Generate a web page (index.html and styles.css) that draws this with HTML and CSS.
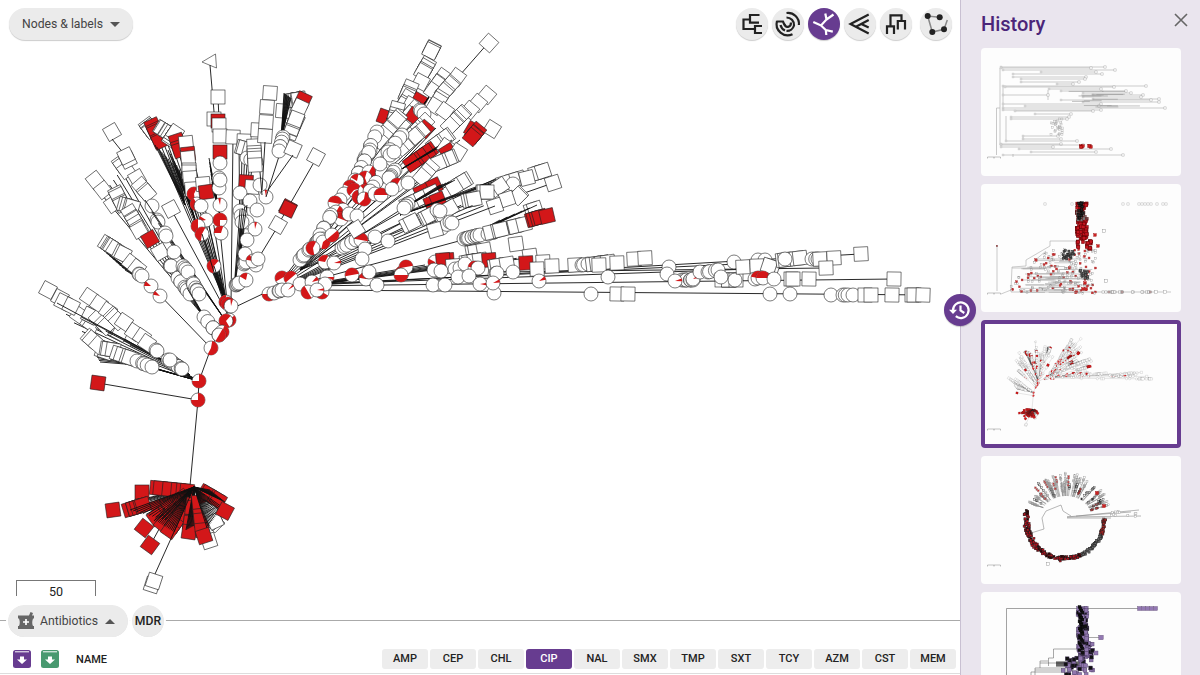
FILE: index.html
```html
<!DOCTYPE html>
<html lang="en">
<head>
	<meta charset="utf-8">
	<title>Tree viewer</title>
	<link rel="stylesheet" href="styles.css">
</head>
<body>
	<div class="app">
		<div class="main">
			<div class="tree">
				<svg id="tree" width="960" height="596" viewBox="0 0 960 596"></svg>
				<button class="pill labels">Nodes &amp; labels <i class="caret down"></i></button>
				<div class="tools">
					<button class="round"><svg viewBox="0 0 32 32"><path d="M14 11.5H7.5V21H19M23.5 7H14v7.7h9M26 18h-7v7h7"/></svg></button>
					<button class="round"><svg viewBox="0 0 32 32"><path d="M14.5 5A11 11 0 0 1 26.9 17M4.5 13.500H11L12.500 17M5 13A11.2 11.2 0 0 0 20.5 26.2M8.5 17A8 8 0 0 0 13 22.500M14.5 9.5A7.500 7.500 0 0 1 22 17.500A7.3 7.3 0 0 1 14.500 22.8M12.5 16C13.500 20.500 19 19.500 19 14.5"/></svg></button>
					<button class="round active"><svg viewBox="0 0 32 32"><path d="M5.3 14L13 17.5 18.5 11.5 17.3 5.5M18.5 11.5L25.5 6.5M13 17.5L17.8 22 24.8 23.6M17.8 22L18.3 27"/></svg></button>
					<button class="round"><svg viewBox="0 0 32 32"><path d="M24.7 6.5L6.5 16 24.7 25.5M24.7 12L12 18.8M17.8 16.3L24.7 19.5"/></svg></button>
					<button class="round"><svg viewBox="0 0 32 32"><path d="M10.5 18V7.3H21.5V13M7 26V18.3H14V26M17.8 21.5V13H25V21.5"/></svg></button>
					<button class="round last"><svg viewBox="0 0 32 32"><path class="gray" d="M19.7 9.3L7.7 8 12.3 24 24 21.3 27.3 12"/><g class="dots"><circle cx="7.7" cy="8" r="3"/><circle cx="19.7" cy="9.3" r="3"/><circle cx="12.3" cy="24" r="3"/><circle cx="24" cy="21.3" r="3"/></g></svg></button>
				</div>
				<div class="scale">50</div>
			</div>
			<div class="bar">
				<button class="pill">
					<svg class="mortar" width="16" height="18" viewBox="0 0 16 18"><path d="M0 3.5H11L12.5 0 15 1 14 3.5H16V6.5H15Q13.5 11 15 14H16V17H0V14H1Q2.500 11 1 6.500H0Z"/><path class="plus" d="M8 7v6M5 10h6"/></svg>
					Antibiotics <i class="caret up"></i>
				</button>
				<button class="round mdr">MDR</button>
			</div>
			<div class="head">
				<svg class="dl" width="18" height="18" viewBox="0 0 18 18"><rect width="18" height="18" rx="2.500"/><path d="M2 1.800H16"/><path class="arrow" d="M7 6.500h4v3h3L9 14 4 9.500h3z"/></svg>
				<svg class="dl green" width="18" height="18" viewBox="0 0 18 18"><rect width="18" height="18" rx="2.500"/><path d="M2 1.800H16"/><path class="arrow" d="M7 6.500h4v3h3L9 14 4 9.500h3z"/></svg>
				<span class="name">NAME</span>
				<div class="cols">
					<span>AMP</span><span>CEP</span><span>CHL</span><span class="current">CIP</span><span>NAL</span><span>SMX</span><span>TMP</span><span>SXT</span><span>TCY</span><span>AZM</span><span>CST</span><span>MEM</span>
				</div>
			</div>
		</div>
		<div class="history">
			<button class="round toggle"><svg viewBox="0 0 32 32"><path d="M9 16.500A7.800 7.800 0 1 1 11.800 22.200M16.500 11.500V16.500L20.300 19"/><path class="tip" d="M5 15.800H13L9 20z"/></svg></button>
			<div class="title">
				<h2>History</h2>
				<svg width="14" height="14" viewBox="0 0 14 14"><path d="M1 1L13 13M13 1L1 13"/></svg>
			</div>
			<div class="list">
				<div class="thumb"><svg id="t1" viewBox="0 0 200 128"></svg></div>
				<div class="thumb"><svg id="t2" viewBox="0 0 200 128"></svg></div>
				<div class="thumb current"><svg id="t3" viewBox="0 0 200 128"></svg></div>
				<div class="thumb"><svg id="t4" viewBox="0 0 200 128"></svg></div>
				<div class="thumb cut"><svg id="t5" viewBox="0 0 200 83"></svg></div>
			</div>
		</div>
	</div>
	<script src="tree.js"></script>
</body>
</html>
```

FILE: styles.css
```css
* {padding: 0; margin: 0; box-sizing: border-box;}
body {
	font-family: Roboto, "Liberation Sans", sans-serif;
	color: #222;
	background: #fff;
	overflow: hidden;
}
button {
	border: 0;
	font-family: inherit;
	cursor: pointer;
}
.app {
	display: flex;
	height: 675px;
}
.main {
	width: 960px;
	display: flex;
	flex-direction: column;
}
.tree {
	position: relative;
	height: 605px;
}
.tree svg {
	display: block;
}
#tree, #t3 {
	stroke: #222;
	stroke-width: .6;
	fill: #fff;
}
#tree .l {
	stroke: #111;
	stroke-width: .9;
}
#t3 {
	stroke-width: 1.1;
}
.red {
	fill: #d31719;
}
.pill {
	display: flex;
	align-items: center;
	height: 32px;
	padding: 0 13px;
	border-radius: 16px;
	background: #ebebeb;
	box-shadow: 0 1px 1px rgba(0,0,0,.2);
	font-size: 12.2px;
	color: #444;
}
.labels {
	position: absolute;
	left: 9px;
	top: 8px;
}
.caret {
	margin-left: 7px;
	border: 5px solid transparent;
}
.down {
	border-top-color: #555;
	border-bottom: 0;
}
.up {
	border-bottom-color: #555;
	border-top: 0;
}
.tools {
	position: absolute;
	right: 8px;
	top: 8px;
	display: flex;
	gap: 4px;
}
.round {
	width: 32px;
	height: 32px;
	border-radius: 50%;
	background: #ebebeb;
	box-shadow: 0 1px 1px rgba(0,0,0,.2);
}
.round svg {
	display: block;
	fill: none;
	stroke: #222;
	stroke-width: 2.2;
}
.round .gray {
	stroke: #888;
	stroke-width: 1.5;
}
.round .dots {
	fill: #222;
	stroke: none;
}
.active, .toggle {
	background: #673c90;
}
.active svg, .toggle svg {
	stroke: #fff;
}
.last {
	margin-left: 4px;
}
.scale {
	position: absolute;
	left: 16px;
	top: 580px;
	width: 80px;
	height: 16px;
	border: 1.5px solid #777;
	border-bottom: 0;
	font-size: 12.5px;
	line-height: 21px;
	text-align: center;
}
.bar {
	display: flex;
	gap: 4px;
	height: 38px;
	padding-left: 8px;
	background: linear-gradient(#aaa, #aaa) 0 15px / 100% 1px no-repeat;
}
.bar .pill {
	padding: 0 13px 0 10px;
	outline: 2px solid #fff;
}
.mortar {
	margin-right: 6px;
	fill: #666;
}
.plus {
	stroke: #fff;
	stroke-width: 1.7;
}
.mdr {
	font-size: 12.2px;
	font-weight: 500;
	white-space: nowrap;
	display: flex;
	align-items: center;
	justify-content: center;
	color: #222;
	outline: 2px solid #fff;
}
.head {
	display: flex;
	align-items: center;
	height: 31px;
	padding: 2px 4px 0 13px;
	border-bottom: 1px solid #ddd;
	font-size: 11px;
	font-weight: 500;
}
.dl {
	margin-right: 10px;
	fill: #673c90;
	stroke: none;
}
.dl path {
	stroke: #fff;
	stroke-width: 1;
}
.dl .arrow {
	fill: #fff;
	stroke: none;
}
.green {
	fill: #48996f;
}
.name {
	margin-left: 7px;
}
.cols {
	display: flex;
	gap: 2px;
	margin-left: auto;
}
.cols span {
	width: 46px;
	height: 20px;
	border-radius: 3px;
	background: #ededed;
	line-height: 20px;
	text-align: center;
}
.cols .current {
	background: #673c90;
	color: #fff;
}
.history {
	position: relative;
	width: 240px;
	padding-left: 20px;
	border-left: 1px solid #c9c0d2;
	background: #eae5ee;
}
.toggle {
	position: absolute;
	left: -17px;
	top: 294px;
}
.toggle .tip {
	fill: #fff;
	stroke: none;
}
.title {
	display: flex;
	justify-content: space-between;
	height: 48px;
	padding: 12px 12px 0 0;
}
.title h2 {
	font-size: 20px;
	font-weight: 500;
	line-height: 24px;
	color: #4b2579;
}
.title svg {
	margin-top: 1px;
	stroke: #666;
	stroke-width: 1.6;
}
.list {
	display: flex;
	flex-direction: column;
	gap: 8px;
}
.thumb {
	width: 200px;
	height: 128px;
	border-radius: 4px;
	background: #fdfdfd;
	overflow: hidden;
}
.thumb svg {
	display: block;
	width: 100%;
	height: 100%;
}
.thumb.current {
	box-shadow: inset 0 0 0 4px #673c90;
}
.thumb.cut {
	height: 83px;
	border-radius: 4px 4px 0 0;
}
```

FILE: tree.js
```javascript
/*
 * l x1 y1 x2 y2        branch
 * f x y x1 y1 x2 y2 n  fan of branches from x,y
 * s / r x y a          leaf, white or red, rotated by a
 * t x y                collapsed leaf
 * c x y [part start]   inner node with a red slice
 * S / R n x1 y1 x2 y2  row of leaves
 * C n x1 y1 x2 y2      row of inner nodes
 */
var data = `
l 190 486 198 400
l 198 400 98 383
l 198 400 199 381
l 199 381 211 348
l 211 348 229 310
l 229 310 275 288
r 98 383 8
f 199 381 50 297 90 340 6
f 199 381 95 352 120 358 6
f 190 375 112 318 125 325 7
f 150 366 95 354 100 362 6
S 2 103 351 106 352
S 3 79 315 92 324
S 4 105 325 120 333
s 48 290 28
s 60 298 28
S 5 63 302 107 324
S 3 98 318 106 326
f 178 368 57 303 130 345 4
s 89 297 34
s 99 304 34
s 108 311 34
S 3 113 316 118 321
s 124 322 34
s 134 332 34
s 142 337 34
s 147 343 34
S 3 90 338 98 345
S 3 107 349 113 350
S 4 118 354 130 358
C 5 137 361 152 367
C 2 156 350 157 351
C 10 168 360 182 369
c 170 360
l 211 348 151 286
f 151 286 103 250 125 270 8
S 5 107 244 115 249
S 2 121 253 123 254
s 131 263 38
s 137 268 38
C 3 139 274 142 276
c 151 286 .12 180
c 160 296 .1 190
f 205 318 102 195 121 170 6
s 95 180 52
s 103 190 52
s 113 204 55
S 4 117 194 122 204
S 4 125 205 132 207
S 5 130 213 139 228
s 112 132 60
l 112 139 124 154
S 3 121 163 126 170
s 128 160 64
s 126 156 64
s 137 178 60
S 3 141 186 147 193
c 152 206
C 2 157 220 158 222
f 225 320 145 200 165 235 4
l 171 209 228 315
s 171 209 62
s 139 230 60
r 150 239 60
s 160 252 60
c 165 233
c 166 236
C 3 170 266 171 266
c 174 252
C 7 178 278 190 294
C 4 183 266 188 272
C 6 193 283 199 294
l 187 288 204 317
C 5 204 317 219 335
f 228 308 150 128 195 165 9
S 5 148 126 151 130
R 5 153 126 160 141
f 185 205 155 145 179 170 12
S 5 162 129 170 134
S 5 171 139 175 133
R 3 177 141 180 150
f 195 220 168 150 185 180 9
s 186 143 84
r 188 154 84
s 188 158 84
S 2 189 170 189 172
s 190 178 86
s 192 189 86
c 194 194 .6 80
c 197 204 .5 60
f 228 312 195 210 220 230 5
s 203 184 85
r 206 192 82
c 201 206
t 210 61
l 210 65 216 135
l 218 97 219 120
s 218 97 0
s 214 119 0
r 218 121 0
s 219 125 0
s 220 136 0
f 220 215 209 158 213 190 9
r 220 152 0
c 220 163
c 219 178
c 219 188
c 220 180
c 220 205 .06 255
c 220 220 .75 90
c 221 233 .3 180
c 206 220 .12 170
c 198 226 .5 90
c 202 234 .55 100
c 214 266 .6 95
l 214 266 228 310
l 202 234 226 310
l 233 137 231 305
s 233 137 2
s 244 141 2
f 240 260 239 140 255 145 6
s 258 130 3
S 3 243 148 250 150
C 3 247 158 256 162
S 5 254 146 255 165
r 246 182 4
s 252 187 4
c 240 193
c 260 185
c 266 197 .05 260
l 262 195 260 172
l 266 197 281 150
c 250 201
c 257 210
c 240 211
c 241 216
c 247 222
c 242 222
c 255 229 .06 265
f 234 290 240 210 247 205 4
s 270 93 4
s 267 107 4
s 266 122 4
s 265 136 4
l 265 142 262 190
s 283 111 5
S 5 293 100 299 99
r 303 100 25
f 281 140 284 93 291 98 12
s 300 107 25
s 296 121 25
S 5 291 132 296 119
C 6 283 137 279 151
s 293 149 24
l 293 155 268 190
s 316 157 28
l 313 164 278 225
r 288 208 28
r 288 209 25
s 278 225 30
l 275 231 258 259
C 3 244 264 246 262
c 247 240
c 245 254
c 256 265
c 253 261 .15 190
c 258 259
C 5 236 285 239 283
c 246 280 .2 210
c 226 302 .5 90
c 229 320 .5 320
c 226 321 .7 60
c 222 332 .6 290
c 219 335 .5 300
c 228 304 .5 130
c 231 306 .06 265
c 211 348 .55 280
c 199 381 .75 270
c 198 400 .75 270
f 300 270 400 110 460 140 6
f 300 270 430 175 530 180 4
f 275 290 410 110 445 200 7
f 315 245 394 110 425 73 9
l 489 42 460 75
s 489 43 42
S 3 432 49 431 51
S 4 427 65 423 72
s 421 82 28
S 3 410 88 407 95
S 4 408 98 399 113
r 419 101 30
r 385 117 20
s 411 105 30
S 5 397 109 392 127
f 420 110 443 76 446 72 4
S 4 443 77 433 91
s 457 77 36
S 4 451 84 444 92
S 3 440 98 435 106
s 445 111 36
s 487 95 40
s 478 103 40
s 470 110 40
S 6 462 114 450 126
r 473 130 30
s 492 129 32
R 4 477 131 472 137
S 5 415 109 401 125
r 414 116 35
C 3 420 110 424 114
S 6 398 118 379 140
C 6 377 132 364 160
S 5 425 122 410 137
r 425 129 40
S 8 421 131 390 158
C 5 402 135 388 152
S 4 446 137 435 145
R 6 429 151 412 163
f 400 170 440 145 452 140 5
s 446 147 35
r 448 152 58
s 458 152 32
S 4 450 158 438 163
C 8 370 150 355 180
c 369 172 .5 300
c 365 178 .6 70
c 390 155
c 394 152
C 4 384 170 373 187
c 380 164
C 4 395 170 390 177
c 389 178
S 4 430 168 422 177
r 434 186 -25
r 422 192 -25
S 3 464 181 454 187
S 5 408 204 432 193
f 400 210 440 185 455 180 6
r 432 203 -22
r 438 200 -22
f 400 215 500 178 540 168 4
S 5 540 172 504 183
s 543 171 -18
l 553 183 510 198
s 553 183 -18
s 527 178 -14
c 513 184
S 2 497 188 500 186
S 3 483 192 487 192
S 3 469 200 474 199
S 2 519 195 518 196
s 507 199 -18
s 495 206 -18
c 357 181 .2 210
c 350 187 .5 200
c 344 194
c 340 200 .5 30
c 354 190 .6 130
c 359 197 .6 80
c 365 191 .3 230
c 370 191
c 364 199 .6 280
c 375 194
c 381 195 .5 180
c 397 185 .5 120
c 392 189
c 408 183
c 335 203 .5 190
c 343 210
c 336 212 .3 300
c 341 219 .5 200
c 349 214
c 357 216
C 5 331 215 320 235
c 323 239 .5 330
C 5 316 243 320 239
c 323 242 .4 320
c 332 235 .5 320
c 300 260
C 4 303 256 310 249
c 313 248 .6 80
f 270 292 450 205 495 206 5
C 4 408 204 404 208
S 2 408 224 412 222
S 3 426 217 430 215
S 4 440 214 450 208
C 2 437 210 440 211
C 3 442 228 450 222
s 435 230 -16
c 452 223
C 6 342 248 356 240
c 361 240 .5 190
c 375 237
c 388 241
c 365 249
c 362 259
s 356 229 -32
l 270 292 470 238
S 2 532 210 535 209
f 470 236 500 220 537 205 6
C 10 464 239 480 235
C 3 488 234 494 232
S 6 491 232 524 224
R 4 533 219 540 217
r 547 216 -13
f 275 290 425 265 535 257 7
l 290 285 780 262
l 290 285 780 268
l 300 286 894 279
l 300 286 860 254
l 500 272 825 268
l 317 290 930 295
s 516 244 -8
s 530 256 -8
s 543 262 -3
c 435 262 .3 100
S 3 473 252 484 250
r 447 260 -4
r 443 260 -4
s 453 266 -4
c 434 270
c 441 271
c 455 269
c 460 268
S 5 467 262 480 260
c 465 264
c 475 268 .4 190
r 489 260 -4
c 478 268
S 3 495 266 507 264
r 526 263 -3
C 3 495 274 497 273
s 537 269 -2
s 552 266 -2
c 513 272
s 575 265 -3
C 3 582 265 588 264
S 5 593 264 608 262
s 599 265 -2
s 617 263 -2
s 634 259 -3
s 645 258 -3
c 458 277
c 469 276
c 433 285
c 445 285
c 480 284 .06 350
c 494 293
c 493 283 .07 330
c 539 281 .08 320
c 608 277
s 617 294 1
s 628 294 1
c 591 294
c 669 267
c 667 274
C 7 682 280 693 280
c 675 281 .06 340
c 693 279 .08 320
c 700 272
C 4 708 272 718 270
c 734 262
c 758 260
c 765 260
S 4 722 280 736 280
c 721 277
c 735 280
s 743 267 -3
s 757 266 -2
S 2 772 267 769 266
c 755 279
c 758 278 .5 190
c 763 278 .5 180
S 4 783 260 800 258
c 785 259
C 3 812 259 818 259
s 820 259 -3
s 834 258 -3
s 826 268 -2
s 861 254 -3
c 774 279
S 2 791 279 793 279
s 809 279 1
s 894 279 1
c 770 294
c 790 294
c 831 295
C 3 843 295 848 295
c 853 295
S 2 865 295 871 295
s 892 295 1
S 2 912 295 914 295
s 923 295 2
c 282 278 .5 150
c 291 278 .5 140
c 300 284
c 269 294 .5 0
c 274 293
C 3 279 291 282 290
c 288 290 .05 310
c 312 282 .1 310
c 308 292 .5 60
c 322 292 .5 30
c 327 277 .08 0
c 325 284
c 317 290 .06 345
c 325 262 .3 190
c 334 263 .06 340
c 352 275 .5 170
c 366 279 .45 190
c 369 272
c 377 285
c 402 273 .6 60
c 406 267 .5 170
c 401 275 .5 0
S 2 215 523 213 521
f 194 487 130 502 165 500 8
r 142 492 0
R 7 157 488 187 491
r 113 510 -8
R 6 130 509 143 505
R 3 158 507 172 503
R 5 182 498 156 517
r 144 528 38
l 165 508 154 521
l 175 500 152 542
r 150 545 36
R 6 177 507 163 524
R 6 184 510 170 530
f 194 487 155 520 174 532 14
R 5 193 505 189 532
f 194 487 186 530 197 524 12
R 4 199 502 202 530
s 209 541 -18
r 204 536 -18
S 4 209 508 215 521
R 4 206 493 218 500
f 194 487 207 528 222 507 16
f 194 487 210 490 225 502 12
r 225 511 28
f 194 487 130 510 165 520 12
l 192 492 155 574
s 152 585 18
s 154 581 18
`;

function $(id) { return document.getElementById(id);}

function line(x1,y1,x2,y2){
	return '<path class="l" d="M' + x1 + ' ' + y1 + 'L' + x2 + ' ' + y2 + '"/>';
}
function leaf(x,y,a,red){
	return '<rect ' + (red ? 'class="red" ' : '') + 'x="-7" y="-7" width="14" height="14" transform="translate(' + x + ' ' + y + ') rotate(' + a + ')"/>';
}
function node(x,y,part,start){
	var html = '<circle cx="' + x + '" cy="' + y + '" r="7"/>';
	if (part) {
		var a = start * Math.PI / 180;
		var b = a + part * Math.PI * 2;
		html += '<path class="red" stroke="none" d="M' + x + ' ' + y +
			'L' + (x + 7 * Math.cos(a)) + ' ' + (y + 7 * Math.sin(a)) +
			'A7 7 0 ' + (part > .5 ? 1 : 0) + ' 1 ' + (x + 7 * Math.cos(b)) + ' ' + (y + 7 * Math.sin(b)) + 'Z"/>';
	}
	return html;
}

function draw(text){
	var html = "";
	var rows = text.trim().split("\n");
	for (var i = 0; i < rows.length; i++) {
		var v = rows[i].split(" ");
		var k = v.shift();
		v = v.map(Number);
		if (k == "l") html += line(v[0],v[1],v[2],v[3]);
		if (k == "s" || k == "r") html += leaf(v[0],v[1],v[2],k == "r");
		if (k == "t") html += '<path transform="translate(' + v[0] + ' ' + v[1] + ')" d="M-8 1L5.500 -7 6.500 7Z"/>';
		if (k == "c") html += node(v[0],v[1],v[2],v[3]);
		if (k == "f") {
			for (var j = 0; j < v[6]; j++) {
				var t = j / (v[6] - 1);
				html += line(v[0],v[1],v[2] + (v[4] - v[2]) * t,v[3] + (v[5] - v[3]) * t);
			}
		}
		if (k == "S" || k == "R" || k == "C") {
			//leaves follow the direction of their row
			var angle = Math.atan2(v[4] - v[2],v[3] - v[1]) * 180 / Math.PI;
			for (var j = 0; j < v[0]; j++) {
				var t = j / (v[0] - 1);
				if (j > 0 && j < v[0] - 1) t += Math.sin(j * 2.4 + i) * .6 / (v[0] - 1); //uneven steps
				var x = v[1] + (v[3] - v[1]) * t;
				var y = v[2] + (v[4] - v[2]) * t;
				html += k == "C" ? node(x,y) : leaf(x,y,angle,k == "R");
			}
		}
	}
	return html;
}

//small repeatable random
var seed = 7;
function rnd(a,b){
	seed = (seed * 16807) % 2147483647;
	return a + (b - a) * seed / 2147483647;
}
function box(x,y,s,fill,stroke){
	return '<rect x="' + (x - s / 2) + '" y="' + (y - s / 2) + '" width="' + s + '" height="' + s + '" fill="' + fill + '" stroke="' + stroke + '" stroke-width=".4"/>';
}
function path(d,color,w){
	return '<path fill="none" stroke="' + color + '" stroke-width="' + w + '" d="' + d + '"/>';
}
var bar = path("M6.500 110.500V109H19.500V110.500M12 109.800H14","#888",.5);

var tree = draw(data);
$("tree").innerHTML = tree;
$("t3").innerHTML = '<g transform="translate(20 12) scale(.163 .159)" stroke-opacity=".6">' + tree + '</g>' + bar;

//first: rectangular tree
var rows1 = [[19,20,124],[20,20,110],[22,22,134],[24,60,115],[26,32,121],[29,32,105],[31,40,104],[34,40,98],[36,76,92],[38,22,165],[39,24,133],[41,68,120],[43,80,145],[45,102,150],[47,22,67],[47,112,162],[49,102,160],[51,112,178],[52,80,170],[54,102,178],[56,22,120],[58,44,118],[60,22,184],[62,22,120],[63,34,112],[66,54,90],[69,30,88],[71,30,86],[88,42,77],[91,42,80],[93,25,96],[96,20,80],[97,20,102],[99,20,72],[101,38,130],[104,50,115],[107,22,142]];
var out = path("M15.500 60V107M15.500 60H19M19 20V97M22 38V62M25 68V93M67 42V52M42 88V92M32 106V109","#bbb",.8);
for (var i = 0; i < rows1.length; i++) {
	out += path("M" + rows1[i][1] + " " + rows1[i][0] + "H" + rows1[i][2],"#999",.5);
	out += box(rows1[i][2],rows1[i][0],2.2,"#fff","#999");
	out += box(rows1[i][1],rows1[i][0],1.8,"#fff","#aaa");
}
for (var i = 0; i < 28; i++) out += box(rnd(70,82),rnd(70,88),2,"none","#aaa");
for (var i = 0; i < 14; i++) out += path("M" + rnd(80,130) + " " + rnd(42,60) + "h" + rnd(15,35),"#999",.6);
for (var i = 0; i < 7; i++) out += box(100 + i % 3 + (i > 3 ? 8 : 0),98 + i % 2,2.500,"#c22","#800");
$("t1").innerHTML = out + bar;

//second: leaves piled up
out = path("M16 62V107M20 110L30 106 31 83 45 82V76L69 62V57H98M55 75H100M44 90H100M30 108H190M45 101H112M31 84H70M52 78L65 67M60 95H110","#aaa",.6);
for (var i = 0; i < 230; i++) {
	var x = rnd(30,115), y = rnd(65,110);
	if (x + y > 130) out += box(x,y,1.900,i % 3 ? "none" : "#ca3030",i % 3 ? "#999" : "#a33");
}
for (var i = 0; i < 35; i++) out += path("M" + rnd(38,80) + " " + rnd(75,109) + "h" + rnd(10,40),"#999",.5);
for (var i = 0; i < 18; i++) out += box(rnd(82,93),rnd(66,75),2.200,"#555","#111");
for (var i = 0; i < 20; i++) out += box(rnd(99,107),rnd(86,95),2.200,"#666","#222");
for (var i = 0; i < 130; i++) {
	var y = rnd(19,66);
	out += box(rnd(96,y > 55 ? 111 : 106),y,3.200,y > 27 && y < 36 ? "#777" : "#c4141f","#500");
}
for (var i = 0; i < 14; i++) out += box(rnd(97,102),rnd(19,36),2.500,"#222","#000");
out += box(114,51,2.500,"#c22","#900") + box(117,62,2.500,"#c22","#900") + box(102,105,2.500,"#c22","#900") + box(105,105,2.500,"#c22","#900") + box(104,99,2.500,"#c22","#900");
var far = [64,91,142,147,158,161,164,167,170,176,182,185];
for (var i = 0; i < far.length; i++) out += box(far[i],20,2.200,"#fff","#aaa");
for (var i = 0; i < 20; i++) out += box(rnd(120,170),108,2.200,i % 4 ? "#fff" : "#b99","#888");
out += box(123,47,2.500,"#fff","#888") + box(125,97,2.500,"#fff","#888") + box(175,108,2.500,"#fff","#999") + box(184,108,2.500,"#fff","#999");
$("t2").innerHTML = out + box(16,62,1.500,"#844","#844") + bar;

//fourth: circular tree
out = "";
for (var i = 0; i < 280; i++) {
	var a = rnd(-2,196) * Math.PI / 180;
	var r = 37.500 + rnd(-1,2) + (a > 1.700 ? rnd(0,3) : 0);
	out += box(85 + r * Math.cos(a),64 + r * Math.sin(a),2.200,a > .4 && a < 1.150 ? "#666" : a > 1.150 ? (i % 3 ? "#b8101c" : "#300") : "#a22","#222");
}
for (var i = 0; i < 60; i++) {
	var a = rnd(202,345) * Math.PI / 180;
	var r = rnd(33,46);
	out += path("M" + (85 + 25 * Math.cos(a)) + " " + (60 + 20 * Math.sin(a)) + "L" + (85 + r * Math.cos(a)) + " " + (64 + r * Math.sin(a)),"#777",.5);
	for (var j = 0; j < 4; j++) {
		var q = r - j * rnd(1,3);
		out += box(85 + q * Math.cos(a),63 + q * Math.sin(a),1.900,i % 7 == 2 ? "#c33" : "none",i % 4 ? "#999" : "#333");
	}
}
out += path("M50 77L63 73 61 62 65 55 80 49 82 55 90 60M86 61L158 54M86 61L160 60M95 60L150 56M86 62L130 62","#888",.6);
for (var i = 0; i < 12; i++) out += box(rnd(130,160),rnd(55,61),2,"#fff","#999");
out += box(116,37,3,"#c22","#900") + box(123,50,3,"#c22","#900") + box(67,108,2.500,"#fff","#888");
$("t4").innerHTML = out + bar;

//fifth: purple
out = path("M25.500 83V16.500H98M100 16.500H160","#666",.6) +
	path("M96 57H72.500V66H67.500V74M67 69H59V76M59 71H96M54 76H90M54 76V83M54 78H86M50 80H90M50 80V83M108 45.500H120","#555",.5);
for (var i = 0; i < 5; i++) out += path("M75 " + (70 + i) + "H100","#111",.8);
for (var i = 0; i < 190; i++) {
	var y = rnd(16,83);
	out += box(rnd(y > 66 ? 82 : 97,y > 66 ? 112 : y > 50 ? 112 : 106),y,3.800,i % 5 < 3 ? "#8f76ad" : "#111","#4a3a60");
}
for (var i = 0; i < 25; i++) out += box(98.500 + i % 4,15 + i * 1.800,2.800,"#111","#000");
out += box(120,45.500,4.500,"#9378b3","#665577") + box(115,61,4,"#9378b3","#665577");
for (var i = 0; i < 5; i++) out += box(158.500 + i * 4,16.500,4,"#9378b3","#665577");
$("t5").innerHTML = out;
```
